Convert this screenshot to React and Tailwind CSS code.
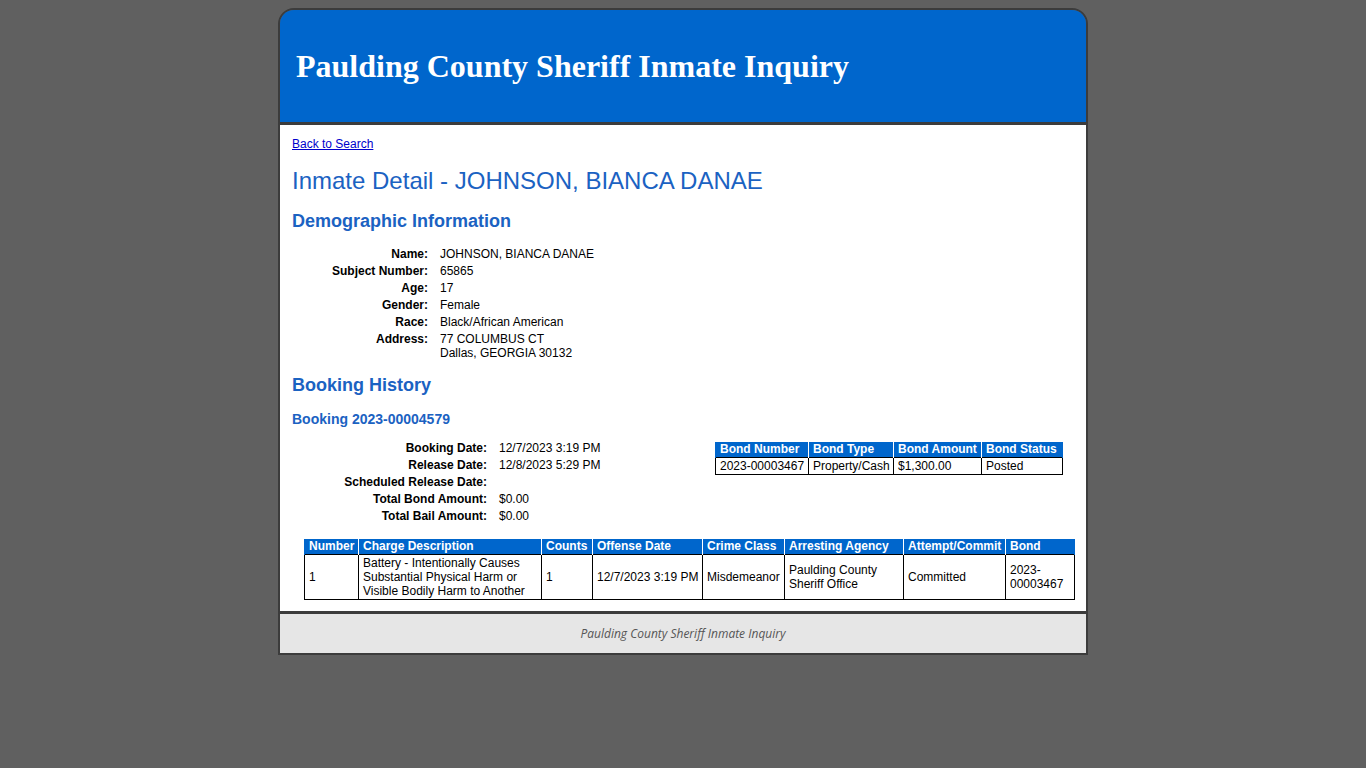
const demographics = [
  ["Name:", ["JOHNSON, BIANCA DANAE"]],
  ["Subject Number:", ["65865"]],
  ["Age:", ["17"]],
  ["Gender:", ["Female"]],
  ["Race:", ["Black/African American"]],
  ["Address:", ["77 COLUMBUS CT", "Dallas, GEORGIA 30132"]],
];

const booking = [
  ["Booking Date:", "12/7/2023 3:19 PM"],
  ["Release Date:", "12/8/2023 5:29 PM"],
  ["Scheduled Release Date:", ""],
  ["Total Bond Amount:", "$0.00"],
  ["Total Bail Amount:", "$0.00"],
];

const bondCols = [
  ["Bond Number", 93],
  ["Bond Type", 85],
  ["Bond Amount", 88],
  ["Bond Status", 81],
];
const bondRow = ["2023-00003467", "Property/Cash", "$1,300.00", "Posted"];

// cells that wrap in the charge row: description, agency, bond
const chargeCols = [
  ["Number", 54, false],
  ["Charge Description", 183, true],
  ["Counts", 51, false],
  ["Offense Date", 110, false],
  ["Crime Class", 82, false],
  ["Arresting Agency", 119, true],
  ["Attempt/Commit", 102, false],
  ["Bond", 69, true],
];
const chargeRow = [
  "1",
  "Battery - Intentionally Causes Substantial Physical Harm or Visible Bodily Harm to Another",
  "1",
  "12/7/2023 3:19 PM",
  "Misdemeanor",
  "Paulding County Sheriff Office",
  "Committed",
  "2023-00003467",
];

const DataTable = ({ cols, row, className }) => (
  <table className={`table-fixed border-collapse text-[12px] ${className}`}>
    <colgroup>
      {cols.map(([label, w]) => (
        <col key={label} style={{ width: w }} />
      ))}
    </colgroup>
    <thead>
      <tr>
        {cols.map(([label]) => (
          <th
            key={label}
            className="bg-[#0066cc] text-white font-bold text-left px-1 leading-[15px] border-x border-white first:border-l-[#0066cc] last:border-r-[#0066cc] whitespace-nowrap"
          >
            {label}
          </th>
        ))}
      </tr>
    </thead>
    <tbody>
      <tr>
        {row.map((v, i) => (
          <td
            key={i}
            className={`border border-black px-1 py-px leading-[14px] align-middle text-black ${
              cols[i][2] ? "" : "whitespace-nowrap"
            }`}
          >
            {v}
          </td>
        ))}
      </tr>
    </tbody>
  </table>
);

export default function App() {
  return (
    <div className="min-h-screen bg-[#606060] pt-2 font-['Liberation_Sans',Arial,sans-serif]">
      <div className="w-[810px] mx-auto border-2 border-[#3c3c3c] rounded-t-[16px] overflow-hidden">
        <header className="h-[115px] bg-[#0066cc] border-b-[3px] border-[#3c3c3c] flex items-center pl-4">
          <h1 className="text-white font-bold text-[32px] font-['Liberation_Serif','Times_New_Roman',serif]">
            Paulding County Sheriff Inmate Inquiry
          </h1>
        </header>

        <main className="bg-white px-3 pt-[12px] pb-[11px]">
          <a href="#" className="block w-fit text-[12px] leading-[14px] text-[#0000cc] underline">
            Back to Search
          </a>
          <h2 className="mt-[16px] text-[24px] leading-[28px] text-[#1b62c2]">
            Inmate Detail - JOHNSON, BIANCA DANAE
          </h2>
          <h3 className="mt-[15px] text-[18px] leading-[22px] font-bold text-[#1b62c2]">
            Demographic Information
          </h3>

          <div className="mt-[13px] grid grid-cols-[136px_1fr] gap-x-3 text-[12px] text-black">
            {demographics.map(([label, vals]) => (
              <div key={label} className="contents">
                <div className="text-right font-bold py-[1.5px] leading-[14px]">{label}</div>
                <div className="py-[1.5px] leading-[14px]">
                  {vals.map((v) => (
                    <div key={v}>{v}</div>
                  ))}
                </div>
              </div>
            ))}
          </div>

          <h3 className="mt-[13px] text-[18px] leading-[22px] font-bold text-[#1b62c2]">
            Booking History
          </h3>
          <h4 className="mt-[14px] text-[14px] leading-[18px] font-bold text-[#1b62c2]">
            Booking 2023-00004579
          </h4>

          <div className="mt-[12px] flex items-start">
            <div className="w-[423px] grid grid-cols-[195px_1fr] gap-x-3 text-[12px] text-black">
              {booking.map(([label, v]) => (
                <div key={label} className="contents">
                  <div className="text-right font-bold leading-[17px]">{label}</div>
                  <div className="leading-[17px]">{v}</div>
                </div>
              ))}
            </div>
            <DataTable cols={bondCols} row={bondRow} className="mt-[2px] w-[347px]" />
          </div>

          <DataTable cols={chargeCols} row={chargeRow} className="mt-[14px] ml-3 w-[770px]" />
        </main>

        <footer className="h-[42px] bg-[#e6e6e6] border-t-[3px] border-[#3c3c3c] flex items-center justify-center">
          <p className="italic text-[12px] text-[#555555] font-['Open_Sans',sans-serif]">
            Paulding County Sheriff Inmate Inquiry
          </p>
        </footer>
      </div>
    </div>
  );
}
